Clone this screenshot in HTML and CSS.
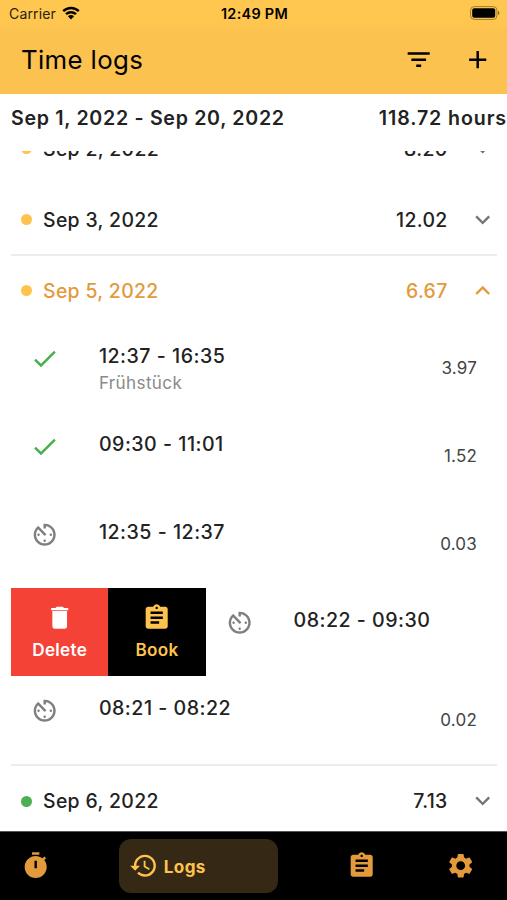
FILE: index.html
```html
<!DOCTYPE html>
<html lang="en">
<head>
<meta charset="utf-8">
<title>Time logs</title>
<link rel="stylesheet" href="styles.css">
</head>
<body>
<svg class="defs" width="0" height="0">
  <symbol id="timer-gray" viewBox="0 0 24 24"><path d="M11 17c0 .55.45 1 1 1s1-.45 1-1-.45-1-1-1-1 .45-1 1zm0-14v4h2V5.08c3.39.49 6 3.39 6 6.92 0 3.87-3.13 7-7 7s-7-3.13-7-7c0-1.68.59-3.22 1.58-4.42L12 13l1.41-1.41-6.8-6.8v.02C4.42 6.45 3 9.05 3 12c0 4.97 4.02 9 9 9 4.97 0 9-4.03 9-9s-4.03-9-9-9h-1zm7 9c0-.55-.45-1-1-1s-1 .45-1 1 .45 1 1 1 1-.45 1-1zM6 12c0 .55.45 1 1 1s1-.45 1-1-.45-1-1-1-1 .45-1 1z"/></symbol>
  <symbol id="done" viewBox="0 0 24 24"><path d="M9 16.2L4.8 12l-1.4 1.4L9 19 21 7l-1.4-1.4L9 16.2z"/></symbol>
  <symbol id="more" viewBox="0 0 24 24"><path d="M16.59 8.59L12 13.17 7.41 8.59 6 10l6 6 6-6z"/></symbol>
  <symbol id="less" viewBox="0 0 24 24"><path d="M12 8l-6 6 1.41 1.41L12 10.83l4.59 4.58L18 14z"/></symbol>
  <symbol id="clipboard" viewBox="0 0 24 24"><path d="M19 3h-4.18C14.4 1.84 13.3 1 12 1c-1.3 0-2.4.84-2.82 2H5c-1.1 0-2 .9-2 2v14c0 1.1.9 2 2 2h14c1.1 0 2-.9 2-2V5c0-1.1-.9-2-2-2zm-7 0c.55 0 1 .45 1 1s-.45 1-1 1-1-.45-1-1 .45-1 1-1zm2 14H7v-2h7v2zm3-4H7v-2h10v2zm0-4H7V7h10v2z"/></symbol>
</svg>
<div class="app">
  <header class="top">
    <div class="status">
      <div class="carrier"><span>Carrier</span>
        <svg class="wifi" viewBox="0 0 18 14"><path d="M1.2 5.2a11.2 11.2 0 0 1 15.6 0M4 8.2a7.2 7.2 0 0 1 10 0" fill="none" stroke="#000" stroke-width="2.4"/><path d="M9 13.4 5.9 10.3a4.4 4.4 0 0 1 6.2 0z"/></svg>
      </div>
      <span class="clock">12:49 PM</span>
      <svg class="battery" viewBox="0 0 30 14"><rect x=".6" y=".6" width="26.3" height="12.8" rx="3.6" fill="none" stroke="#a07c32" stroke-width="1"/><rect x="2.2" y="2.2" width="23" height="9.6" rx="2"/><path d="M28 4.8c1.8.6 1.8 3.8 0 4.4z" fill="#8a6b2a"/></svg>
    </div>
    <div class="bar">
      <h1>Time logs</h1>
      <svg class="icon" viewBox="0 0 24 24"><path d="M10 18h4v-2h-4v2zM3 6v2h18V6H3zm3 7h12v-2H6v2z"/></svg>
      <svg class="icon" viewBox="0 0 24 24"><path d="M19 13h-6v6h-2v-6H5v-2h6V5h2v6h6v2z"/></svg>
    </div>
  </header>
  <div class="summary"><span>Sep 1, 2022 - Sep 20, 2022</span><span class="total">118.72 hours</span></div>
  <main class="list">
    <div class="day first"><i class="dot"></i><span class="date">Sep 2, 2022</span><span class="sum">8.20</span><svg class="icon"><use href="#more"/></svg></div>
    <div class="day"><i class="dot"></i><span class="date">Sep 3, 2022</span><span class="sum">12.02</span><svg class="icon"><use href="#more"/></svg></div>
    <section class="group">
      <div class="day open"><i class="dot"></i><span class="date">Sep 5, 2022</span><span class="sum">6.67</span><svg class="icon"><use href="#less"/></svg></div>
      <div class="entry"><svg class="icon ok"><use href="#done"/></svg><div class="text"><div class="range">12:37 - 16:35</div><div class="note">Frühstück</div></div><span class="dur">3.97</span></div>
      <div class="entry"><svg class="icon ok"><use href="#done"/></svg><div class="text"><div class="range">09:30 - 11:01</div></div><span class="dur">1.52</span></div>
      <div class="entry"><svg class="icon"><use href="#timer-gray"/></svg><div class="text"><div class="range">12:35 - 12:37</div></div><span class="dur">0.03</span></div>
      <div class="swipe">
        <div class="action delete"><svg class="icon" viewBox="0 0 24 24"><path d="M6 19c0 1.1.9 2 2 2h8c1.1 0 2-.9 2-2V6.5H6V19zM19 4h-3.5l-1-1h-5l-1 1H5v2h14V4z"/></svg><span>Delete</span></div>
        <div class="action book"><svg class="icon"><use href="#clipboard"/></svg><span>Book</span></div>
        <div class="entry"><svg class="icon"><use href="#timer-gray"/></svg><div class="text"><div class="range">08:22 - 09:30</div></div></div>
      </div>
      <div class="entry"><svg class="icon"><use href="#timer-gray"/></svg><div class="text"><div class="range">08:21 - 08:22</div></div><span class="dur">0.02</span></div>
    </section>
    <div class="day last"><i class="dot green"></i><span class="date">Sep 6, 2022</span><span class="sum">7.13</span><svg class="icon"><use href="#more"/></svg></div>
  </main>
  <nav class="tabs">
    <svg class="icon" viewBox="0 0 24 24"><path fill-rule="evenodd" d="M15 1H9v2h6V1zm-4 13h2V8h-2v6zm8.03-6.61 1.42-1.42c-.43-.51-.9-.99-1.41-1.41l-1.42 1.42C16.07 4.74 14.12 4 12 4c-4.97 0-9 4.03-9 9s4.02 9 9 9 9-4.03 9-9c0-2.12-.74-4.07-1.97-5.61z"/></svg>
    <div class="active"><svg class="icon" viewBox="0 0 24 24"><path d="M13 3c-4.97 0-9 4.03-9 9H1l3.89 3.89.07.14L9 12H6c0-3.87 3.13-7 7-7s7 3.13 7 7-3.13 7-7 7c-1.93 0-3.68-.79-4.94-2.06l-1.42 1.42C8.27 19.99 10.51 21 13 21c4.97 0 9-4.03 9-9s-4.03-9-9-9zm-1 5v5l4.28 2.54.72-1.21-3.5-2.08V8H12z"/></svg><span>Logs</span></div>
    <svg class="icon" viewBox="0 0 24 24"><use href="#clipboard"/></svg>
    <svg class="icon" viewBox="0 0 24 24"><path d="M19.14 12.94c.04-.3.06-.61.06-.94 0-.32-.02-.64-.07-.94l2.03-1.58c.18-.14.23-.41.12-.61l-1.92-3.32c-.12-.22-.37-.29-.59-.22l-2.39.96c-.5-.38-1.03-.7-1.62-.94l-.36-2.54c-.04-.24-.24-.41-.48-.41h-3.84c-.24 0-.43.17-.47.41l-.36 2.54c-.59.24-1.13.57-1.62.94l-2.39-.96c-.22-.08-.47 0-.59.22L2.74 8.87c-.12.21-.08.47.12.61l2.03 1.58c-.05.3-.09.63-.09.94s.02.64.07.94l-2.03 1.58c-.18.14-.23.41-.12.61l1.92 3.32c.12.22.37.29.59.22l2.39-.96c.5.38 1.03.7 1.62.94l.36 2.54c.05.24.24.41.48.41h3.84c.24 0 .44-.17.47-.41l.36-2.54c.59-.24 1.13-.56 1.62-.94l2.39.96c.22.08.47 0 .59-.22l1.92-3.32c.12-.22.07-.47-.12-.61l-2.01-1.58zM12 15.6c-1.98 0-3.6-1.62-3.6-3.6s1.62-3.6 3.6-3.6 3.6 1.62 3.6 3.6-1.62 3.6-3.6 3.6z"/></svg>
  </nav>
</div>
</body>
</html>
```
FILE: styles.css
```css
* { box-sizing: border-box; }
body { margin: 0; font-family: Inter, "Liberation Sans", sans-serif; color: #222; background: #fff; }
.defs { display: block; }
.app { width: 507px; height: 900px; overflow: hidden; display: flex; flex-direction: column; white-space: nowrap; }
.icon { width: 29.4px; height: 29.4px; flex: none; fill: currentColor; display: block; }
.top { height: 94px; flex: none; background: linear-gradient(#ffc750 0, #ffc750 20px, #fcc24f 32px); color: #000; }
.status { height: 27px; display: grid; grid-template-columns: 1fr auto 1fr; align-items: center; padding: 0 7px 0 9px; }
.carrier { display: flex; align-items: center; gap: 6px; font-size: 14px; letter-spacing: .15px; color: #2a2111; }
.wifi { width: 18px; height: 14px; margin-top: -1px; }
.clock { font-size: 14.4px; font-weight: 600; letter-spacing: .3px; }
.battery { width: 30px; height: 14px; justify-self: end; margin-top: -1px; }
.bar { height: 66px; display: flex; align-items: center; padding: 0 15px 0 21px; gap: 29px; }
h1 { margin: -2px 0 0; flex: 1; font-size: 25.8px; font-weight: 400; letter-spacing: .35px; }
.summary { height: 57px; flex: none; display: flex; justify-content: space-between; padding: 11px 0 0 11px; font-size: 19.6px; line-height: 26px; font-weight: 600; letter-spacing: .7px; }
.total { letter-spacing: .9px; }
.list { height: 680px; flex: none; overflow: hidden; padding: 0 10px 0 11px; }
.day { height: 71px; display: flex; align-items: center; padding-left: 10px; font-size: 19.4px; font-weight: 500; letter-spacing: .35px; border-bottom: 2px solid #ececec; }
.day.first { margin-top: -37px; border-color: transparent; }
.day.open { height: 68px; padding-top: 1px; border: 0; color: #e29a3c; }
.day.last { height: 70px; border: 0; }
.day .icon { color: #757575; }
.day.open .icon { color: #e29a3c; }
.dot { width: 11px; height: 11px; border-radius: 50%; background: #ffc34d; margin-right: 11px; }
.dot.green { background: #4caf50; }
.date { flex: 1; }
.sum { margin-right: 20px; }
.group { border-bottom: 2px solid #ececec; }
.entry { height: 88px; display: flex; align-items: flex-start; padding: 20px 20px 0 19px; }
.entry .icon { color: #808080; margin-top: -.5px; }
.entry .icon.ok { color: #43b04a; }
.text { flex: 1; margin-left: 39.5px; }
.range { font-size: 19.6px; line-height: 25px; font-weight: 500; letter-spacing: .5px; }
.note { font-size: 17.1px; line-height: 27px; letter-spacing: .35px; color: #8a8a8a; }
.dur { margin-top: 12px; font-size: 17px; line-height: 25px; letter-spacing: .2px; color: #444; }
.swipe { display: flex; }
.swipe .entry { flex: 1; }
.action { width: 97.3px; height: 88px; display: flex; flex-direction: column; align-items: center; padding-top: 14.5px; gap: 6px; font-size: 17.1px; line-height: 23px; font-weight: 600; letter-spacing: .3px; }
.delete { background: #f44336; color: #fff; }
.book { background: #000; color: #ffc34d; }
.tabs { height: 69px; flex: none; background: #000; border-top: 1px solid #555; color: #e29a3c; display: flex; align-items: center; justify-content: space-between; padding: 0 32px 0 21px; }
.active { width: 159px; height: 54px; border-radius: 12px; background: #352814; color: #ffc34d; display: flex; align-items: center; padding-left: 10px; gap: 5px; font-size: 17.1px; font-weight: 700; letter-spacing: .4px; }
```
